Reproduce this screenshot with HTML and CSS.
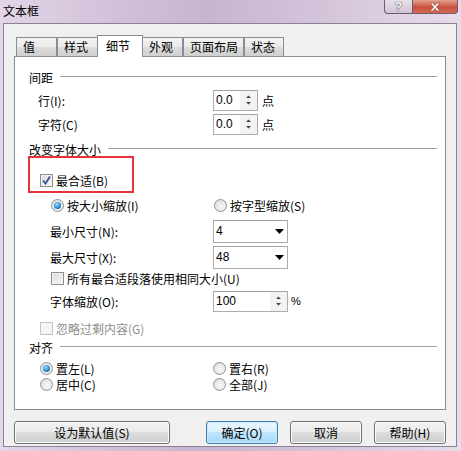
FILE: index.html
```html
<!DOCTYPE html>
<html lang="zh-CN">
<head>
<meta charset="utf-8">
<title>文本框</title>
<link rel="stylesheet" href="styles.css">
</head>
<body>
<div class="window">
  <div class="titlebar">
    <span class="title">文本框</span>
    <div class="caption-btns">
      <span class="cap help">?</span>
      <span class="cap close"><svg width="16" height="10" viewBox="0 0 16 10"><path d="M3 1h3l2 2.5 2-2.5h3l-3.5 4 3.5 4h-3l-2-2.5-2 2.5h-3l3.5-4z" fill="#fff" stroke="#8a3a30" stroke-width="0.6"/></svg></span>
    </div>
  </div>
  <div class="client">
    <div class="tabs">
      <span class="tab w41">值</span>
      <span class="tab w41">样式</span>
      <span class="tab sel">细节</span>
      <span class="tab w41">外观</span>
      <span class="tab w61">页面布局</span>
      <span class="tab w40">状态</span>
    </div>
    <div class="panel">
      <div class="hdr"><span>间距</span><i class="rule"></i></div>
      <div class="row r24 first-field">
        <span class="lbl m23">行(I):</span>
        <span class="spin w45"><span class="val">0.0</span><span class="arrows"><svg width="7" height="12" viewBox="0 0 7 12"><path d="M1 4h5L3.5 1.5z M1 8h5L3.5 10.5z" fill="#444"/></svg></span></span>
        <span class="unit">点</span>
      </div>
      <div class="row r24">
        <span class="lbl m23">字符(C)</span>
        <span class="spin w45"><span class="val">0.0</span><span class="arrows"><svg width="7" height="12" viewBox="0 0 7 12"><path d="M1 4h5L3.5 1.5z M1 8h5L3.5 10.5z" fill="#444"/></svg></span></span>
        <span class="unit">点</span>
      </div>
      <div class="hdr h2"><span>改变字体大小</span><i class="rule"></i></div>
      <div class="row cbrow c1">
        <span class="cb checked"><svg width="11" height="11" viewBox="0 0 11 11"><path d="M2 5.5l2.5 3L9 1.5" fill="none" stroke="#3b4f95" stroke-width="1.8"/></svg></span>
        <span class="cbtext">最合适(B)</span>
      </div>
      <div class="row radios1">
        <span class="opt w163"><span class="radio on"></span><span>按大小缩放(I)</span></span>
        <span class="opt"><span class="radio"></span><span>按字型缩放(S)</span></span>
      </div>
      <div class="row r24 min">
        <span class="lbl m35">最小尺寸(N):</span>
        <span class="combo"><span class="val">4</span><svg width="9" height="5" viewBox="0 0 9 5"><path d="M0 0h9L4.5 5z" fill="#000"/></svg></span>
      </div>
      <div class="row r24 max">
        <span class="lbl m35">最大尺寸(X):</span>
        <span class="combo"><span class="val">48</span><svg width="9" height="5" viewBox="0 0 9 5"><path d="M0 0h9L4.5 5z" fill="#000"/></svg></span>
      </div>
      <div class="row cbrow c2">
        <span class="cb"></span>
        <span class="cbtext">所有最合适段落使用相同大小(U)</span>
      </div>
      <div class="row r24 scale">
        <span class="lbl m35">字体缩放(O):</span>
        <span class="spin w75"><span class="val">100</span><span class="arrows"><svg width="7" height="12" viewBox="0 0 7 12"><path d="M1 4h5L3.5 1.5z M1 8h5L3.5 10.5z" fill="#444"/></svg></span></span>
        <span class="unit pct">%</span>
      </div>
      <div class="row cbrow c3 disabled">
        <span class="cb"></span>
        <span class="cbtext">忽略过剩内容(G)</span>
      </div>
      <div class="hdr h3"><span>对齐</span><i class="rule"></i></div>
      <div class="row radrow first">
        <span class="opt w173"><span class="radio on"></span><span>置左(L)</span></span>
        <span class="opt"><span class="radio"></span><span>置右(R)</span></span>
      </div>
      <div class="row radrow">
        <span class="opt w173"><span class="radio"></span><span>居中(C)</span></span>
        <span class="opt"><span class="radio"></span><span>全部(J)</span></span>
      </div>
      <div class="mark"></div>
    </div>
    <div class="buttons">
      <span class="btn b-default">设为默认值(S)</span>
      <span class="spacer"></span>
      <span class="btn focus">确定(O)</span>
      <span class="btn">取消</span>
      <span class="btn">帮助(H)</span>
    </div>
  </div>
</div>
</body>
</html>
```
FILE: styles.css
```css
html, body { margin: 0; padding: 0; }
body {
  font-family: "Liberation Sans", "Noto Sans CJK SC", sans-serif;
  font-size: 12px;
  color: #000;
  background: #d9cbe0;
}
.window {
  width: 461px;
  height: 451px;
  box-sizing: border-box;
  padding: 0 4px 4px 3px;
  display: flex;
  flex-direction: column;
  background: linear-gradient(90deg, #e2d6e8 0%, #d2c0d8 25%, #c8b4cf 45%, #d4c4da 70%, #e6dcea 100%);
}
.titlebar {
  height: 23px;
  display: flex;
  align-items: flex-start;
  justify-content: space-between;
}
.title {
  font-family: "Noto Sans CJK SC", sans-serif;
  font-size: 12px;
  line-height: 20px;
  padding-top: 1px;
}
.caption-btns { display: flex; margin-right: -1px; }
.cap {
  height: 14px;
  display: flex;
  align-items: center;
  justify-content: center;
  box-sizing: border-box;
  border: 1px solid #6d5a73;
  border-top: none;
}
.help {
  width: 29px;
  border-radius: 0 0 0 4px;
  background: linear-gradient(#e8e0ec, #cfc3d6);
  color: #fff;
  font-weight: bold;
  font-size: 12px;
  line-height: 12px;
  text-shadow: 0 0 1px #333, 0 0 1px #333;
}
.close {
  width: 46px;
  margin-left: -1px;
  border-radius: 0 0 4px 0;
  background: linear-gradient(#e4a190, #c9503c 55%, #d66a52);
}
.client {
  flex: 1;
  background: #f0f0f0;
  border: 1px solid #8a8292;
  padding: 11px 0 0 10px;
  display: flex;
  flex-direction: column;
}
.tabs {
  display: flex;
  align-items: flex-end;
  height: 21px;
  margin-left: 2px;
  position: relative;
  z-index: 2;
}
.tab {
  box-sizing: border-box;
  height: 19px;
  border: 1px solid #898c95;
  border-bottom: none;
  background: linear-gradient(#f2f2f2, #ebebeb 50%, #dddddd 51%, #cfcfcf);
  padding: 0 0 0 6px;
  line-height: 18px;
  font-family: "Noto Sans CJK SC", sans-serif;
}
.w40 { width: 40px; }
.w41 { width: 41px; }
.w61 { width: 61px; }
.tab.sel {
  width: 46px;
  height: 22px;
  margin: 0 -1px -1px -1px;
  background: #fff;
  line-height: 19px;
  padding-left: 8px;
  position: relative;
  z-index: 3;
}
.panel {
  position: relative;
  width: 432px;
  height: 354px;
  box-sizing: border-box;
  border: 1px solid #898c95;
  background: #fff;
  display: flex;
  flex-direction: column;
}
.hdr {
  display: flex;
  align-items: center;
  height: 16px;
  margin: 12px 8px 0 14px;
  font-family: "Noto Sans CJK SC", sans-serif;
}
.hdr .rule {
  flex: 1;
  height: 0;
  border-top: 1px solid #a0a0a0;
  margin-left: 7px;
  margin-top: -1px;
}
.hdr.h2 { margin-top: 6px; height: 14px; }
.hdr.h3 { margin-top: 2px; }
.row { display: flex; align-items: center; }
.r24 { height: 24px; }
.first-field { margin-top: 3px; }
.lbl { font-family: "Noto Sans CJK SC", sans-serif; }
.m23 { margin-left: 23px; width: 175px; }
.m35 { margin-left: 35px; width: 163px; }
.spin, .combo {
  box-sizing: border-box;
  height: 21px;
  border: 1px solid #abadb3;
  border-top-color: #a0a3aa;
  background: #fff;
  display: flex;
  align-items: center;
}
.spin .val, .combo .val { flex: 1; padding-left: 2px; line-height: 19px; }
.w45 { width: 45px; }
.w75 { width: 75px; }
.arrows {
  width: 17px;
  height: 19px;
  background: #f2f2f2;
  display: flex;
  align-items: center;
  justify-content: center;
}
.unit { margin-left: 4px; font-family: "Noto Sans CJK SC", sans-serif; }
.unit.pct { font-family: "Liberation Sans", sans-serif; font-size: 11px; margin-left: 3px; }
.combo { width: 75px; height: 23px; padding-right: 3px; }
.cbrow { height: 20px; }
.cbtext { margin-left: 3px; font-family: "Noto Sans CJK SC", sans-serif; }
.cb {
  width: 13px;
  height: 13px;
  box-sizing: border-box;
  border: 1px solid #8e8f8f;
  background: linear-gradient(135deg, #dcdcdc, #f6f6f6);
  box-shadow: inset 0 0 0 1px #f4f4f4;
  display: flex;
  align-items: center;
  justify-content: center;
}
.c1 { margin-top: 14px; margin-left: 25px; }
.c2 { margin-top: 0; margin-left: 36px; height: 18px; }
.c3 { margin-top: 6px; margin-left: 25px; height: 18px; }
.disabled { color: #8d8d8d; }
.disabled .cb { border-color: #c4c4c4; background: #f4f4f4; }
.radios1 { height: 20px; margin-top: 5px; margin-left: 36px; }
.opt { display: flex; align-items: center; font-family: "Noto Sans CJK SC", sans-serif; }
.opt .radio { margin-right: 3px; }
.w163 { width: 163px; }
.w173 { width: 173px; }
.radio {
  width: 13px;
  height: 13px;
  box-sizing: border-box;
  border-radius: 50%;
  border: 1px solid #939393;
  background: radial-gradient(circle at 60% 60%, #f8f8f8, #d8d8d8);
  display: inline-flex;
  align-items: center;
  justify-content: center;
}
.radio.on::after {
  content: "";
  width: 7px;
  height: 7px;
  border-radius: 50%;
  background: radial-gradient(circle at 40% 35%, #9ee0ff, #2a8ad4 55%, #15518f);
}
.min { margin-top: 4px; }
.max { margin-top: 2px; }
.scale { margin-top: 2px; }
.radrow { height: 16px; margin-left: 25px; }
.radrow.first { margin-top: 5px; }
.mark {
  position: absolute;
  left: 13px;
  top: 99px;
  width: 106px;
  height: 37px;
  box-sizing: border-box;
  border: 2px solid #e8323a;
}
.buttons {
  display: flex;
  margin-top: 11px;
  width: 432px;
  gap: 12px;
}
.btn {
  box-sizing: border-box;
  height: 23px;
  width: 72px;
  border: 1px solid #707070;
  border-radius: 3px;
  background: linear-gradient(#f2f2f2, #ebebeb 45%, #dddddd 50%, #cfcfcf);
  display: flex;
  align-items: center;
  justify-content: center;
  font-family: "Noto Sans CJK SC", sans-serif;
  box-shadow: inset 0 0 0 1px #fcfcfc;
}
.btn.b-default { width: 156px; }
.spacer { flex: 1; }
.btn.focus {
  border-color: #3c7fb1;
  background: linear-gradient(#eaf6fd, #d9f0fc 45%, #bee6fd 50%, #a7d9f5);
  box-shadow: inset 0 0 0 1px #c8ecfc;
}
```
